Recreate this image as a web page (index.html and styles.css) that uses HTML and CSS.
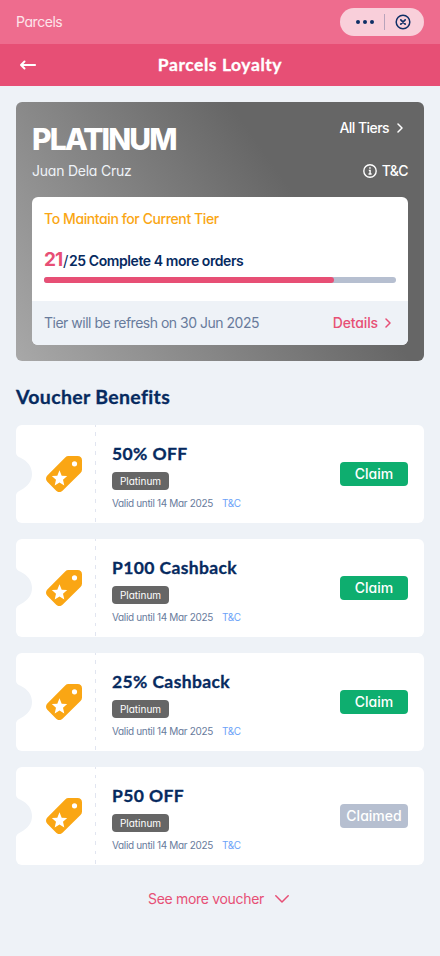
FILE: index.html
```html
<!DOCTYPE html>
<html lang="en">
<head>
<meta charset="utf-8">
<meta name="viewport" content="width=device-width, initial-scale=1">
<title>Parcels Loyalty</title>
<link rel="stylesheet" href="styles.css">
</head>
<body>
<svg width="0" height="0" class="sprite" aria-hidden="true">
  <symbol id="notch" viewBox="0 0 16 42"><path d="M0 0C.5 2.500 2 3.600 4.500 4.800C12 8.500 16 14 16 21S12 33.500 4.500 37.200C2 38.400 .5 39.500 0 42Z" fill="#eef2f7"/></symbol>
  <symbol id="tag" viewBox="0 0 36 36"><path fill="#faa614" fill-rule="evenodd" d="M22.500 0H31.500Q36 0 36 4.500V13.500Q36 15.500 34.500 17L16.500 34.800Q13.300 37.500 10.200 34.800L1.300 25.800Q-1.300 22.800 1.300 19.600L19.200 1.400Q20.600 0 22.500 0ZM28.500 5.200A2.600 2.600 0 1 0 28.500 10.400A2.600 2.600 0 1 0 28.500 5.200ZM13.500 14.300L11.300 19.700L5.800 20.100L10 23.800L8.700 29.400L13.500 26.400L18.300 29.400L17 23.800L21.200 20.100L15.700 19.700Z"/></symbol>
  <symbol id="chevron" viewBox="0 0 6 10"><path d="M1 1L5 5L1 9" fill="none" stroke="currentColor" stroke-width="1.500" stroke-linecap="round" stroke-linejoin="round"/></symbol>
</svg>
<header class="app-bar">
  <span class="app-name">Parcels</span>
  <div class="capsule">
    <svg class="dots" width="18" height="4" viewBox="0 0 18 4"><g fill="#0f2f66"><circle cx="2" cy="2" r="2"/><circle cx="9" cy="2" r="2"/><circle cx="16" cy="2" r="2"/></g></svg>
    <i class="divider"></i>
    <svg width="16" height="16" viewBox="0 0 16 16" fill="none" stroke="#0f2f66" stroke-width="1.500"><circle cx="8" cy="8" r="6.800"/><path d="M5.800 5.800L10.200 10.200M10.200 5.800L5.800 10.200" stroke-width="1.700" stroke-linecap="round"/></svg>
  </div>
</header>
<nav class="title-bar">
  <svg class="back" width="16" height="10" viewBox="0 0 16 10"><path d="M15.200 5H1.500M4.500 1.500L1 5L4.500 8.500" fill="none" stroke="#fff" stroke-width="1.900" stroke-linecap="round" stroke-linejoin="round"/></svg>
  <h1>Parcels Loyalty</h1>
</nav>
<main>
  <section class="tier-card">
    <div class="tier-row">
      <h2>PLATINUM</h2>
      <a class="all-tiers"><span>All Tiers</span><svg width="6" height="10"><use href="#chevron"/></svg></a>
    </div>
    <div class="tier-row member-row">
      <span class="member">Juan Dela Cruz</span>
      <a class="terms"><svg width="14" height="14" viewBox="0 0 14 14" fill="none" stroke="#fff" stroke-width="1.400"><circle cx="7" cy="7" r="6.200"/><path d="M5.800 6.400H7.100V10M5.500 10H8.600"/><path d="M6.200 4H7.700" stroke-width="1.500"/></svg><span>T&amp;C</span></a>
    </div>
    <div class="progress-card">
      <div class="progress-body">
        <div class="maintain">To Maintain for Current Tier</div>
        <div class="orders"><b>21</b><span class="slash">/</span><span class="orders-text">25 Complete 4 more orders</span></div>
        <div class="track"><div class="fill"></div></div>
      </div>
      <div class="progress-foot">
        <span class="refresh">Tier will be refresh on 30 Jun 2025</span>
        <a class="details"><span>Details</span><svg width="6" height="10"><use href="#chevron"/></svg></a>
      </div>
    </div>
  </section>
  <h2 class="section-title">Voucher Benefits</h2>
  <section class="vouchers">
    <article class="voucher">
      <div class="stub"><svg class="notch" width="16" height="42"><use href="#notch"/></svg><svg class="tag" width="36" height="36"><use href="#tag"/></svg></div>
      <div class="info"><h3>50% OFF</h3><span class="badge">Platinum</span><p><span class="valid">Valid until 14 Mar 2025</span><a>T&amp;C</a></p></div>
      <button>Claim</button>
    </article>
    <article class="voucher">
      <div class="stub"><svg class="notch" width="16" height="42"><use href="#notch"/></svg><svg class="tag" width="36" height="36"><use href="#tag"/></svg></div>
      <div class="info"><h3>P100 Cashback</h3><span class="badge">Platinum</span><p><span class="valid">Valid until 14 Mar 2025</span><a>T&amp;C</a></p></div>
      <button>Claim</button>
    </article>
    <article class="voucher">
      <div class="stub"><svg class="notch" width="16" height="42"><use href="#notch"/></svg><svg class="tag" width="36" height="36"><use href="#tag"/></svg></div>
      <div class="info"><h3>25% Cashback</h3><span class="badge">Platinum</span><p><span class="valid">Valid until 14 Mar 2025</span><a>T&amp;C</a></p></div>
      <button>Claim</button>
    </article>
    <article class="voucher">
      <div class="stub"><svg class="notch" width="16" height="42"><use href="#notch"/></svg><svg class="tag" width="36" height="36"><use href="#tag"/></svg></div>
      <div class="info"><h3>P50 OFF</h3><span class="badge">Platinum</span><p><span class="valid">Valid until 14 Mar 2025</span><a>T&amp;C</a></p></div>
      <button class="claimed" disabled>Claimed</button>
    </article>
  </section>
  <a class="more"><span>See more voucher</span><svg width="14" height="8" viewBox="0 0 14 8"><path d="M.8.800L7 7L13.200.800" fill="none" stroke="currentColor" stroke-width="1.500" stroke-linecap="round" stroke-linejoin="round"/></svg></a>
</main>
</body>
</html>
```

FILE: styles.css
```css
* { box-sizing: border-box; }
body {
  margin: 0;
  min-height: 956px;
  background: #eef2f7;
  color: #062a5f;
  font: 14px/20px Inter, "Liberation Sans", sans-serif;
  font-feature-settings: "cv11";
  white-space: nowrap;
}
h1, h2, h3, p { margin: 0; }
svg { display: block; flex: none; }
.sprite { position: absolute; }

.app-bar {
  height: 44px;
  padding: 0 16px;
  display: flex;
  align-items: center;
  justify-content: space-between;
  background: #ee6c8e;
}
.app-name { color: #fde4ea; letter-spacing: -0.45px; }
.capsule {
  width: 84px;
  height: 28px;
  padding: 0 13px 0 16px;
  border-radius: 14px;
  display: flex;
  align-items: center;
  justify-content: space-between;
  background: #f9cfda;
}
.divider { width: 1px; height: 16px; background: #b8a3bb; }

.title-bar {
  height: 42px;
  padding: 0 20px;
  display: grid;
  grid-template-columns: 16px 1fr 16px;
  align-items: center;
  background: #e74f75;
}
.title-bar h1 {
  text-align: center;
  color: #fff;
  font: 700 17.5px/24px Lato, sans-serif;
  letter-spacing: 0.55px;
  -webkit-text-stroke: 0.3px;
}

main { padding: 16px; }
.tier-card {
  height: 259px;
  padding: 16px;
  border-radius: 6px;
  color: #fff;
  background: linear-gradient(55deg, #a8a8a8 0%, #666 67%, #666 100%);
}
.tier-row { display: flex; justify-content: space-between; }
.tier-row h2 { height: 42px; font-size: 30px; line-height: 43px; font-weight: 800; letter-spacing: -1.9px; }
.all-tiers { height: 20px; padding-right: 5px; display: flex; align-items: center; gap: 8px; font-weight: 500; letter-spacing: -0.55px; }
.member-row { height: 20px; margin-top: 1px; }
.member { color: #eef2f7; letter-spacing: -0.23px; }
.terms { display: flex; align-items: center; gap: 5px; font-weight: 500; letter-spacing: -0.6px; }
.progress-card { height: 148px; margin-top: 16px; border-radius: 6px; overflow: hidden; background: #fff; }
.progress-body { height: 104px; padding: 12px 12px 0; }
.maintain { color: #faa614; font-weight: 500; line-height: 20px; letter-spacing: -0.4px; }
.orders { display: flex; align-items: baseline; height: 27px; margin-top: 17px; line-height: 28px; color: #062a5f; }
.orders b { width: 19px; color: #e74f75; font-size: 19px; font-weight: 700; letter-spacing: -0.9px; }
.slash { width: 6px; font-size: 15px; }
.orders-text { font-weight: 600; letter-spacing: -0.42px; }
.track { height: 6px; margin-top: 4px; border-radius: 3px; background: #b6bfd0; }
.fill { width: 290px; height: 6px; border-radius: 3px; background: #e74f75; }
.progress-foot {
  height: 44px;
  padding: 0 17px 0 12px;
  display: flex;
  align-items: center;
  justify-content: space-between;
  background: #eef2f7;
}
.refresh { color: #687b9c; letter-spacing: -0.49px; }
.details { display: flex; align-items: center; gap: 7px; color: #e74f75; font-weight: 500; letter-spacing: -0.15px; }

.section-title {
  margin: 22px 0 14px;
  font: 700 19.5px/28px Lato, sans-serif;
  letter-spacing: 0.33px;
  font-variant-ligatures: none;
  -webkit-text-stroke: 0.3px;
}
.vouchers { display: flex; flex-direction: column; gap: 16px; }
.voucher {
  height: 98px;
  padding-right: 16px;
  border-radius: 6px;
  display: flex;
  align-items: center;
  background: #fff;
}
.stub {
  width: 80px;
  height: 98px;
  display: flex;
  align-items: center;
  gap: 14px;
  background: repeating-linear-gradient(#e1e5f0 0 2px, transparent 2px 7.5px, #e1e5f0 7.5px 9.5px) right / 1px 100% no-repeat;
}
.info { flex: 1; padding: 5px 0 0 16px; }
.info h3 { font: 700 17.5px/24px Lato, sans-serif; letter-spacing: 0.38px; -webkit-text-stroke: 0.3px; }
.badge {
  width: 57px;
  height: 18px;
  margin-top: 6px;
  border-radius: 4px;
  display: flex;
  align-items: center;
  justify-content: center;
  background: #666;
  color: #fff;
  font-size: 10px;
}
.info p { display: flex; gap: 9px; height: 17px; margin-top: 5px; font-size: 10px; line-height: 16px; letter-spacing: -0.34px; color: #687b9c; }
.info a { color: #6ba2f8; }
button {
  width: 68px;
  height: 24px;
  padding: 0;
  border: 0;
  border-radius: 4px;
  background: #0eae6f;
  color: #fff;
  font: 500 14px/24px Inter, sans-serif;
  font-feature-settings: "cv11";
}
.claimed { background: #b6bfd0; }
.more { height: 20px; margin-top: 24px; padding-right: 3px; display: flex; align-items: center; justify-content: center; gap: 11px; color: #e74f75; letter-spacing: -0.32px; }
```
